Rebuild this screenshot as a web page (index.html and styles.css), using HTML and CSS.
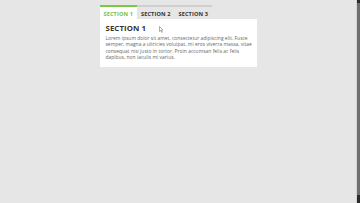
FILE: index.html
```html
<!DOCTYPE html>
<html lang="en">
<head>
  <meta charset="UTF-8">
  <meta name="viewport" content="width=device-width, initial-scale=1.0">
  <title>Tabs</title>
  <link rel="stylesheet" href="styles.css">
</head>
<body>
  <div class="tabs">
    <div class="tab-list">
      <button class="tab active">SECTION 1</button>
      <button class="tab">SECTION 2</button>
      <button class="tab">SECTION 3</button>
    </div>
    <div class="panel">
      <h2>SECTION 1</h2>
      <p>Lorem ipsum dolor sit amet, consectetur adipiscing elit. Fusce semper, magna a ultricies volutpat, mi eros viverra massa, vitae consequat nisi justo in tortor. Proin accumsan felis ac felis dapibus, non iaculis mi varius.</p>
    </div>
    <svg class="cursor" width="5" height="7" viewBox="0 0 5 7">
      <path d="M0.5 0.5 L0.5 5.5 L1.7 4.4 L2.6 6.4 L3.3 6.1 L2.4 4.1 L4 4 Z" fill="#fff" stroke="#777" stroke-width="0.6"/>
    </svg>
  </div>
  <div class="scrollbar"><div class="thumb"></div></div>
</body>
</html>
```

FILE: styles.css
```css
body {
  margin: 0;
  padding: 5px 4px 0 0;
  background-color: #e6e6e6;
  font-family: "Open Sans", "Noto Sans", sans-serif;
  color: #333;
}
.scrollbar {
  position: fixed;
  top: 0;
  right: 0;
  bottom: 0;
  width: 4px;
  background: #2b2b2b;
  border-left: 1px solid #d4d4d4;
  padding: 3px 0 8px;
  box-sizing: border-box;
}
.thumb {
  height: 100%;
  background: #6e6e6e;
}
.tabs {
  position: relative;
  width: 157px;
  margin: 0 auto;
}
.tab-list {
  display: flex;
}
.tab {
  width: 37.5px;
  height: 14px;
  padding: 1px 0 0;
  margin: 0;
  border: none;
  border-top: 2px solid #cfcfcf;
  background: transparent;
  font-family: inherit;
  font-size: 5.6px;
  font-weight: 700;
  color: #333;
  letter-spacing: 0.1px;
  cursor: pointer;
}
.tab.active {
  background: #fff;
  color: #79c143;
  border-top-color: #7ac943;
}
.panel {
  background: #fff;
  padding: 4px 4px 6px 6px;
}
.panel h2 {
  margin: 0 0 2px;
  font-size: 7.8px;
  font-weight: 700;
  color: #333;
  letter-spacing: 0.1px;
}
.panel p {
  margin: 0;
  font-size: 4.9px;
  line-height: 6.4px;
  letter-spacing: 0.03px;
  color: #666;
}
.cursor {
  position: absolute;
  left: 59px;
  top: 21px;
}
```
